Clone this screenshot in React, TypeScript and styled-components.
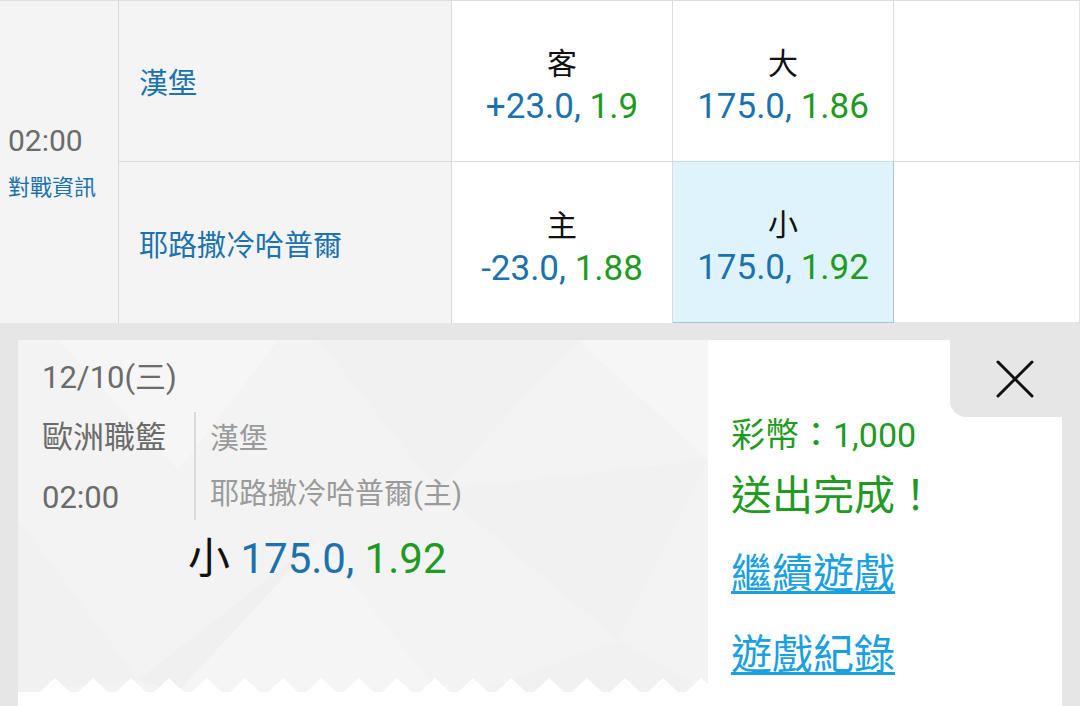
import React from "react";
import styled, { createGlobalStyle } from "styled-components";

const GlobalStyle = createGlobalStyle`
    html, body {
        margin: 0;
        padding: 0;
        width: 1080px;
        height: 706px;
        overflow: hidden;
        background: #e6e6e6;
        font-family: Roboto, "Noto Sans CJK TC", sans-serif;
    }
`;

const BLUE = "#1b72ad";
const GREEN = "#1f9a22";

const Table = styled.div`
    display: grid;
    grid-template-columns: 119px 333px 221px 221px 1fr;
    grid-template-rows: 161px 161px;
    border-top: 1px solid #dedede;
    box-sizing: border-box;
    height: 322px;
    background: #fff;
`;

const TimeCell = styled.div`
    grid-row: 1 / span 2;
    background: #f4f4f4;
    border-right: 1px solid #d9d9d9;
    display: flex;
    flex-direction: column;
    justify-content: center;
    padding: 8px 0 0 8px;
`;

const TimeText = styled.div`
    font-size: 30px;
    line-height: 44px;
    color: #6b6b6b;
`;

const InfoLink = styled.div`
    font-size: 22px;
    line-height: 50px;
    color: ${BLUE};
`;

const TeamCell = styled.div<{ $last?: boolean }>`
    background: #f4f4f4;
    border-right: 1px solid #d9d9d9;
    border-bottom: ${(p) => (p.$last ? "none" : "1px solid #d9d9d9")};
    display: flex;
    align-items: center;
    padding-left: 20px;
    font-size: 29px;
    color: ${BLUE};
`;

const OddsCell = styled.div<{ $selected?: boolean; $last?: boolean }>`
    background: ${(p) => (p.$selected ? "#dff3fc" : "#fff")};
    border-right: 1px solid ${(p) => (p.$selected ? "#a8c8d8" : "#dcdcdc")};
    border-bottom: ${(p) => (p.$selected ? "1px solid #a8c8d8" : p.$last ? "none" : "1px solid #dcdcdc")};
    border-top: ${(p) => (p.$selected ? "1px solid #c4dde9" : "none")};
    margin-top: ${(p) => (p.$selected ? "-1px" : "0")};
    display: flex;
    flex-direction: column;
    align-items: center;
    justify-content: center;
    padding-top: 10px;
`;

const OddsLabel = styled.div`
    font-size: 30px;
    line-height: 42px;
    color: #111;
`;

const OddsValue = styled.div`
    font-size: 35px;
    line-height: 44px;
    white-space: nowrap;
`;

const Blue = styled.span`
    color: ${BLUE};
`;

const Green = styled.span`
    color: ${GREEN};
`;

const EmptyCell = styled.div<{ $last?: boolean }>`
    border-bottom: ${(p) => (p.$last ? "none" : "1px solid #dcdcdc")};
    border-right: 1px solid #e4e4e4;
`;

const Sheet = styled.div`
    padding: 18px 18px 0 18px;
`;

const Card = styled.div`
    position: relative;
    display: flex;
    height: 380px;
    background: #fff;
`;

const Ticket = styled.div`
    position: relative;
    width: 690px;
    height: 352px;
    background: #f3f3f3;
    box-sizing: border-box;
    padding: 18px 0 0 24px;
`;

const Pattern = styled.svg`
    position: absolute;
    left: 0;
    top: 0;
    width: 100%;
    height: 100%;
`;

const TicketBody = styled.div`
    position: relative;
`;

const DateLine = styled.div`
    font-size: 31px;
    line-height: 40px;
    color: #6b6b6b;
`;

const InfoRow = styled.div`
    display: flex;
    margin-top: 10px;
`;

const LeagueCol = styled.div`
    width: 152px;
    font-size: 31px;
    line-height: 60px;
    color: #6b6b6b;
`;

const TeamsCol = styled.div`
    border-left: 2px solid #dadada;
    margin-top: 4px;
    height: 108px;
    padding-left: 14px;
    font-size: 29px;
    line-height: 55px;
    color: #9a9a9a;
`;

const Pick = styled.div`
    margin-top: 6px;
    padding-left: 146px;
    font-size: 42px;
    line-height: 50px;
    white-space: nowrap;
    color: #111;
`;

const Zigzag = styled.svg`
    position: absolute;
    left: 0;
    bottom: 0;
    width: 690px;
    height: 15px;
`;

const Result = styled.div`
    flex: 1;
    padding: 72px 0 0 23px;
`;

const Coins = styled.div`
    font-size: 34px;
    line-height: 46px;
    color: ${GREEN};
    white-space: nowrap;
`;

const Done = styled.div`
    margin-top: 8px;
    font-size: 41px;
    line-height: 60px;
    color: ${GREEN};
    white-space: nowrap;
`;

const ActionLink = styled.a<{ $gap: number }>`
    display: block;
    width: fit-content;
    margin-top: ${(p) => p.$gap}px;
    font-size: 41px;
    line-height: 56px;
    color: #1aa0e0;
    text-decoration: underline;
    text-decoration-thickness: 3px;
    text-underline-offset: 3px;
    cursor: pointer;
`;

const CloseTab = styled.button`
    position: absolute;
    top: 0;
    right: -18px;
    width: 130px;
    height: 77px;
    border: none;
    padding: 0;
    background: #e6e6e6;
    border-bottom-left-radius: 16px;
    display: flex;
    align-items: center;
    justify-content: center;
    cursor: pointer;
`;

function Odds({ label, line, price, selected, last }: { label: string; line: string; price: string; selected?: boolean; last?: boolean }) {
    return (
        <OddsCell $selected={selected} $last={last}>
            <OddsLabel>{label}</OddsLabel>
            <OddsValue>
                <Blue>{line}, </Blue>
                <Green>{price}</Green>
            </OddsValue>
        </OddsCell>
    );
}

// faint low-poly backdrop of the ticket
function TicketPattern() {
    return (
        <Pattern viewBox="0 0 690 352" preserveAspectRatio="none">
            <polygon points="40,0 160,130 260,0" fill="#f6f6f6" />
            <polygon points="300,0 420,150 560,0" fill="#f1f1f1" />
            <polygon points="560,0 690,0 690,120" fill="#f6f6f6" />
            <polygon points="0,180 120,340 0,352" fill="#f1f1f1" />
            <polygon points="160,352 300,200 420,352" fill="#f5f5f5" />
            <polygon points="420,150 690,120 600,300" fill="#f1f1f1" />
            <polygon points="460,352 600,300 690,352" fill="#f1f1f1" />
            <polygon points="120,340 300,200 160,352" fill="#f0f0f0" />
        </Pattern>
    );
}

function TicketEdge() {
    const teeth = [];
    for (let i = 0; i < 19; i++) {
        const x = 22 + i * 38;
        teeth.push(<polygon key={i} points={`${x},15 ${x + 15},1 ${x + 30},15`} fill="#fff" />);
    }
    return (
        <Zigzag viewBox="0 0 690 15">
            {teeth}
        </Zigzag>
    );
}

export default function App() {
    return (
        <>
            <GlobalStyle />
            <Table>
                <TimeCell>
                    <TimeText>02:00</TimeText>
                    <InfoLink>對戰資訊</InfoLink>
                </TimeCell>
                <TeamCell>漢堡</TeamCell>
                <Odds label="客" line="+23.0" price="1.9" />
                <Odds label="大" line="175.0" price="1.86" />
                <EmptyCell />
                <TeamCell $last>耶路撒冷哈普爾</TeamCell>
                <Odds label="主" line="-23.0" price="1.88" last />
                <Odds label="小" line="175.0" price="1.92" selected last />
                <EmptyCell $last />
            </Table>
            <Sheet>
                <Card>
                    <Ticket>
                        <TicketPattern />
                        <TicketBody>
                            <DateLine>12/10(三)</DateLine>
                            <InfoRow>
                                <LeagueCol>
                                    <div>歐洲職籃</div>
                                    <div>02:00</div>
                                </LeagueCol>
                                <TeamsCol>
                                    <div>漢堡</div>
                                    <div>耶路撒冷哈普爾(主)</div>
                                </TeamsCol>
                            </InfoRow>
                            <Pick>
                                小 <Blue>175.0, </Blue>
                                <Green>1.92</Green>
                            </Pick>
                        </TicketBody>
                        <TicketEdge />
                    </Ticket>
                    <Result>
                        <Coins>彩幣：1,000</Coins>
                        <Done>送出完成！</Done>
                        <ActionLink $gap={20}>繼續遊戲</ActionLink>
                        <ActionLink $gap={25}>遊戲紀錄</ActionLink>
                    </Result>
                    <CloseTab aria-label="close">
                        <svg width="40" height="40" viewBox="0 0 40 40">
                            <line x1="3" y1="3" x2="37" y2="37" stroke="#111" strokeWidth="3" strokeLinecap="round" />
                            <line x1="37" y1="3" x2="3" y2="37" stroke="#111" strokeWidth="3" strokeLinecap="round" />
                        </svg>
                    </CloseTab>
                </Card>
            </Sheet>
        </>
    );
}
